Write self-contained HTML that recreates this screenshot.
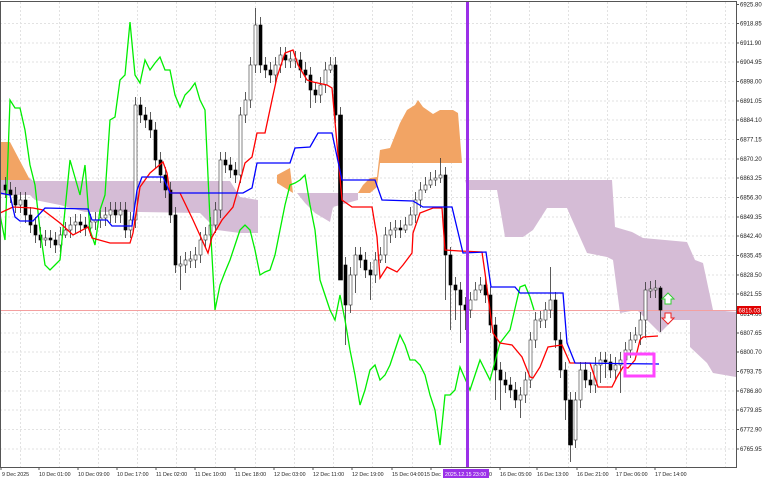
<!DOCTYPE html>
<html><head><meta charset="utf-8"><style>
body{margin:0;background:#fff;}
svg{display:block;font-family:"Liberation Sans",sans-serif;}
.g{stroke:#e2e2e2;stroke-dasharray:2 2;stroke-width:1}
.t{font-size:6px;fill:#222}
.tb{font-size:5.3px;fill:#222}
.b{fill:#000;stroke:#000;stroke-width:.6}
.w{fill:#fff;stroke:#333;stroke-width:.6}
</style></head><body>
<svg width="768" height="480" viewBox="0 0 768 480" xmlns="http://www.w3.org/2000/svg">
<rect width="768" height="480" fill="#fff"/>
<g class="g">
<path d="M0 23.5H736M0 43H736M0 62H736M0 81.5H736M0 101H736M0 120H736M0 139.5H736M0 159H736M0 178H736M0 197.5H736M0 217H736M0 236H736M0 255.5H736M0 275H736M0 294H736M0 313.5H736M0 333H736M0 352H736M0 371.5H736M0 391H736M0 410H736M0 429.5H736M0 449H736"/>
<path d="M20.5 2V467M59.5 2V467M98.5 2V467M137.5 2V467M176.5 2V467M215.5 2V467M255.5 2V467M294.5 2V467M333.5 2V467M372.5 2V467M412.5 2V467M451.5 2V467M490.5 2V467M529.5 2V467M568.5 2V467M607.5 2V467M646.5 2V467M686.5 2V467M725.5 2V467"/>
</g>
<g fill="#d5bcd6">
<polygon points="0,178 30,178 33,181 230,181 240,197 258,200 258,233 240,233 217,230 200,213 140,212 85,212 60,205 35,200 30,195 0,195"/>
<polygon points="297,193 358,193 358,200 333,207 330,222 315,213 305,203"/>
<polygon points="465,180 612,180 615,227 632,232 643,238 687,242 695,260 703,263 713,310 736,312 736,377 713,373 707,363 690,347 690,320 673,320 660,333 637,310 620,313 613,260 607,257 587,253 570,215 567,208 547,208 533,230 523,237 505,237 497,190 468,190"/>
</g>
<g fill="#f2a464">
<polygon points="0,142 10,142 30,180 0,180"/>
<polygon points="277,175 290,168 293,193 277,183"/>
<polygon points="358,193 363,185 370,178 377,177 380,150 390,148 400,123 407,110 415,105 418,100 423,107 433,114 440,110 453,110 458,113 462,163 380,163 377,187 370,193"/>
</g>
<line x1="0" y1="310.5" x2="736" y2="310.5" stroke="#f4a0a0" stroke-width="1"/>
<path stroke="#333" stroke-width="0.8" fill="none" d="M5.5 177V198M10.5 182V203M15.5 187V213M20.5 192V213M25.5 192V223M30.5 207V233M35.5 217V243M40.5 227V248M45.5 230V246M50.5 230V248M55.5 232V253M60.5 227V253M65.5 222V238M70.5 217V238M75.5 214V233M80.5 214V233M85.5 217V236M90.5 214V236M95.5 212V230M100.5 210V228M105.5 207V226M110.5 202V223M115.5 202V223M120.5 202V223M125.5 202V238M130.5 212V238M135.5 97V228M140.5 97V123M145.5 107V128M150.5 112V138M155.5 122V168M160.5 152V183M165.5 167V198M170.5 182V223M175.5 207V273M180.5 256V290M185.5 252V273M190.5 251V268M195.5 247V268M200.5 232V263M205.5 227V248M210.5 217V243M215.5 202V233M220.5 152V218M225.5 152V173M230.5 157V178M235.5 162V183M240.5 107V183M245.5 92V123M250.5 57V108M255.5 8V73M260.5 17V73M265.5 57V78M270.5 62V83M275.5 57V83M280.5 47V73M285.5 47V68M290.5 51V68M295.5 51V68M300.5 52V78M305.5 62V83M310.5 67V108M315.5 82V103M320.5 77V103M325.5 62V93M330.5 57V73M335.5 57V123M340.5 107V273M345.5 257V345M350.5 267V313M355.5 247V293M360.5 247V268M365.5 252V278M370.5 262V300M375.5 252V283M380.5 247V263M385.5 227V263M390.5 222V243M395.5 220V238M400.5 220V238M405.5 217V233M410.5 207V223M415.5 192V223M420.5 182V208M425.5 177V193M430.5 172V188M435.5 170V186M440.5 158V183M445.5 167V300M450.5 247V330M455.5 277V320M460.5 282V343M465.5 297V330M470.5 292V318M475.5 282V298M480.5 277V293M485.5 277V303M490.5 287V333M495.5 317V400M500.5 362V410M505.5 372V393M510.5 377V398M515.5 382V408M520.5 387V418M525.5 372V403M530.5 332V388M535.5 312V348M540.5 311V328M545.5 302V328M550.5 267V318M555.5 292V348M560.5 332V378M565.5 362V420M570.5 392V462M575.5 392V448M580.5 362V408M585.5 362V388M590.5 372V393M595.5 357V393M600.5 352V383M605.5 352V378M610.5 354V378M615.5 357V380M620.5 352V393M625.5 342V368M630.5 332V358M635.5 327V343M640.5 312V345M645.5 282V338M650.5 281V298M655.5 280V298M660.5 286V332"/>
<g class="b">
<rect x="4" y="185" width="3" height="5"/><rect x="9" y="190" width="3" height="5"/><rect x="14" y="195" width="3" height="10"/><rect x="24" y="200" width="3" height="15"/><rect x="29" y="215" width="3" height="10"/><rect x="34" y="225" width="3" height="10"/><rect x="39" y="235" width="3" height="5"/><rect x="49" y="238" width="3" height="2"/><rect x="54" y="240" width="3" height="5"/><rect x="79" y="222" width="3" height="3"/><rect x="84" y="225" width="3" height="3"/><rect x="114" y="210" width="3" height="5"/><rect x="124" y="210" width="3" height="20"/><rect x="139" y="105" width="3" height="10"/><rect x="144" y="115" width="3" height="5"/><rect x="149" y="120" width="3" height="10"/><rect x="154" y="130" width="3" height="30"/><rect x="159" y="160" width="3" height="15"/><rect x="164" y="175" width="3" height="15"/><rect x="169" y="190" width="3" height="25"/><rect x="174" y="215" width="3" height="50"/><rect x="224" y="160" width="3" height="5"/><rect x="229" y="165" width="3" height="5"/><rect x="234" y="170" width="3" height="5"/><rect x="259" y="25" width="3" height="40"/><rect x="264" y="65" width="3" height="5"/><rect x="269" y="70" width="3" height="5"/><rect x="284" y="55" width="3" height="5"/><rect x="299" y="60" width="3" height="10"/><rect x="304" y="70" width="3" height="5"/><rect x="309" y="75" width="3" height="15"/><rect x="314" y="90" width="3" height="5"/><rect x="334" y="65" width="3" height="50"/><rect x="338.5" y="115" width="4" height="165"/><rect x="344" y="265" width="3" height="40"/><rect x="359" y="255" width="3" height="5"/><rect x="364" y="260" width="3" height="10"/><rect x="369" y="270" width="3" height="5"/><rect x="399" y="228" width="3" height="2"/><rect x="444" y="175" width="3" height="80"/><rect x="449" y="255" width="3" height="30"/><rect x="454" y="285" width="3" height="5"/><rect x="459" y="290" width="3" height="15"/><rect x="464" y="305" width="3" height="5"/><rect x="484" y="285" width="3" height="10"/><rect x="489" y="295" width="3" height="30"/><rect x="494" y="325" width="3" height="45"/><rect x="499" y="370" width="3" height="10"/><rect x="504" y="380" width="3" height="5"/><rect x="509" y="385" width="3" height="5"/><rect x="514" y="390" width="3" height="10"/><rect x="554" y="300" width="3" height="40"/><rect x="559" y="340" width="3" height="30"/><rect x="564" y="370" width="3" height="30"/><rect x="568.5" y="400" width="4" height="45"/><rect x="584" y="370" width="3" height="10"/><rect x="589" y="380" width="3" height="5"/><rect x="604" y="360" width="3" height="2"/><rect x="609" y="362" width="3" height="8"/><rect x="659" y="288" width="3" height="22"/>
</g>
<g class="w">
<rect x="19" y="200" width="3" height="5"/><rect x="44" y="238" width="3" height="2"/><rect x="59" y="235" width="3" height="10"/><rect x="64" y="230" width="3" height="5"/><rect x="69" y="225" width="3" height="5"/><rect x="74" y="222" width="3" height="3"/><rect x="89" y="222" width="3" height="6"/><rect x="94" y="220" width="3" height="2"/><rect x="99" y="218" width="3" height="2"/><rect x="104" y="215" width="3" height="3"/><rect x="109" y="210" width="3" height="5"/><rect x="119" y="210" width="3" height="5"/><rect x="129" y="220" width="3" height="10"/><rect x="134" y="105" width="3" height="115"/><rect x="179" y="264" width="3" height="2"/><rect x="184" y="260" width="3" height="5"/><rect x="189" y="259" width="3" height="2"/><rect x="194" y="255" width="3" height="5"/><rect x="199" y="240" width="3" height="15"/><rect x="204" y="235" width="3" height="5"/><rect x="209" y="225" width="3" height="10"/><rect x="214" y="210" width="3" height="15"/><rect x="219" y="160" width="3" height="50"/><rect x="239" y="115" width="3" height="60"/><rect x="244" y="100" width="3" height="15"/><rect x="249" y="65" width="3" height="35"/><rect x="254" y="25" width="3" height="40"/><rect x="274" y="65" width="3" height="10"/><rect x="279" y="55" width="3" height="10"/><rect x="289" y="59" width="3" height="2"/><rect x="294" y="59" width="3" height="2"/><rect x="319" y="85" width="3" height="10"/><rect x="324" y="70" width="3" height="15"/><rect x="329" y="65" width="3" height="5"/><rect x="349" y="275" width="3" height="30"/><rect x="354" y="255" width="3" height="20"/><rect x="374" y="260" width="3" height="15"/><rect x="379" y="255" width="3" height="5"/><rect x="384" y="235" width="3" height="20"/><rect x="389" y="230" width="3" height="5"/><rect x="394" y="228" width="3" height="2"/><rect x="404" y="225" width="3" height="5"/><rect x="409" y="215" width="3" height="10"/><rect x="414" y="200" width="3" height="15"/><rect x="419" y="190" width="3" height="10"/><rect x="424" y="185" width="3" height="5"/><rect x="429" y="180" width="3" height="5"/><rect x="434" y="178" width="3" height="2"/><rect x="439" y="175" width="3" height="3"/><rect x="469" y="300" width="3" height="10"/><rect x="474" y="290" width="3" height="10"/><rect x="479" y="285" width="3" height="5"/><rect x="519" y="395" width="3" height="5"/><rect x="524" y="380" width="3" height="15"/><rect x="529" y="340" width="3" height="40"/><rect x="534" y="320" width="3" height="20"/><rect x="539" y="319" width="3" height="2"/><rect x="544" y="310" width="3" height="10"/><rect x="549" y="300" width="3" height="10"/><rect x="574" y="400" width="3" height="40"/><rect x="579" y="370" width="3" height="30"/><rect x="594" y="365" width="3" height="20"/><rect x="599" y="360" width="3" height="5"/><rect x="614" y="365" width="3" height="5"/><rect x="619" y="360" width="3" height="5"/><rect x="624" y="350" width="3" height="10"/><rect x="629" y="340" width="3" height="10"/><rect x="634" y="335" width="3" height="5"/><rect x="639" y="320" width="3" height="15"/><rect x="644" y="290" width="3" height="30"/><rect x="649" y="289" width="3" height="2"/><rect x="654" y="288" width="3" height="2"/>
</g>
<polyline fill="none" stroke="#00ee00" stroke-width="1.3" points="0,215 5,240 10,100 15,108 20,108 25,130 30,165 35,185 40,230 45,265 50,270 55,265 60,260 65,210 70,160 80,195 85,165 90,230 95,245 100,210 105,195 110,120 115,117 120,80 125,75 130,22 135,75 140,83 145,60 150,70 155,63 160,57 165,70 170,70 175,95 180,107 185,95 190,90 195,83 200,100 205,110 210,220 215,310 220,285 225,272 230,260 235,245 240,230 245,225 250,230 255,250 260,275 265,272 270,270 275,255 280,230 285,205 290,185 295,183 300,180 305,175 310,205 315,230 320,280 325,295 330,310 335,320 340,295 345,320 350,350 355,375 360,405 365,390 370,370 375,365 380,380 385,375 390,365 395,350 400,335 405,345 410,360 415,360 420,365 425,375 430,395 435,410 440,445 445,395 450,395 455,390 460,367 470,390 480,360 490,380 500,343 510,330 520,287 525,285 530,297 534,310"/>
<polyline fill="none" stroke="#ff0000" stroke-width="1.3" points="0,213 13,207 33,208 43,210 60,223 73,235 88,227 92,238 110,243 130,243 133,233 140,187 150,173 163,162 167,173 170,193 180,193 193,220 208,253 212,237 222,220 233,207 237,193 245,163 252,157 257,133 265,133 272,100 277,77 285,53 293,50 298,65 307,80 313,82 327,85 332,88 342,200 352,207 372,207 377,237 380,278 387,267 397,272 403,265 412,253 413,233 420,213 433,208 442,208 445,250 460,251 482,252 485,273 493,333 500,343 512,345 522,357 530,377 533,378 540,367 548,347 562,345 570,363 590,363 598,387 612,387 617,377 623,367 628,368 635,360 640,340 643,337 658,336"/>
<polyline fill="none" stroke="#0000ff" stroke-width="1.3" points="0,193 10,195 15,217 20,221 33,221 45,208 88,209 92,220 107,220 112,226 132,226 137,190 142,177 163,177 170,193 243,193 252,188 257,163 290,163 295,148 310,147 318,133 332,133 342,180 375,180 382,200 413,201 423,207 452,207 463,253 486,252 491,287 515,287 520,293 563,293 567,343 575,363 659,364"/>
<rect x="466" y="2" width="3" height="465" fill="#9b30e8"/>
<rect x="625" y="354" width="29" height="22" fill="none" stroke="#ff44ff" stroke-width="3"/>
<path d="M665 304V299H662L668 293L674 299H671V304Z" fill="#fff" stroke="#33cc33" stroke-width="1"/>
<path d="M665 313V318H662L668 324L674 318H671V313Z" fill="#fff" stroke="#ee2222" stroke-width="1"/>
<rect x="0.5" y="1.5" width="736" height="466" fill="none" stroke="#555" stroke-width="1"/>
<g stroke="#555"><path d="M736 4.5h3M736 23.5h3M736 43h3M736 62h3M736 81.5h3M736 101h3M736 120h3M736 139.5h3M736 159h3M736 178h3M736 197.5h3M736 217h3M736 236h3M736 255.5h3M736 275h3M736 294h3M736 333h3M736 352h3M736 371.5h3M736 391h3M736 410h3M736 429.5h3M736 449h3"/></g>
<g class="t">
<text x="740" y="6.5">6925.80</text><text x="740" y="25.5">6918.85</text><text x="740" y="45">6911.90</text><text x="740" y="64">6904.95</text><text x="740" y="83.5">6898.00</text><text x="740" y="103">6891.05</text><text x="740" y="122">6884.10</text><text x="740" y="141.5">6877.15</text><text x="740" y="161">6870.20</text><text x="740" y="180">6863.25</text><text x="740" y="199.5">6856.30</text><text x="740" y="219">6849.35</text><text x="740" y="238">6842.40</text><text x="740" y="257.5">6835.45</text><text x="740" y="277">6828.50</text><text x="740" y="296">6821.55</text><text x="740" y="316">6814.60</text><text x="740" y="335">6807.65</text><text x="740" y="354">6800.70</text><text x="740" y="373.5">6793.75</text><text x="740" y="393">6786.80</text><text x="740" y="412">6779.85</text><text x="740" y="431.5">6772.90</text><text x="740" y="451">6765.95</text>
</g>
<rect x="737" y="306" width="24" height="8" fill="#e00000"/>
<text x="738.5" y="312.5" font-size="6" fill="#fff">6815.03</text>
<g stroke="#555"><path d="M1 467v3M39 467v3M78 467v3M117 467v3M156 467v3M195 467v3M235 467v3M274 467v3M313 467v3M352 467v3M392 467v3M431 467v3M500 467v3M537 467v3M577 467v3M616 467v3M655 467v3"/></g>
<g class="tb">
<text x="2" y="476">9 Dec 2025</text><text x="39" y="476">10 Dec 01:00</text><text x="78" y="476">10 Dec 09:00</text><text x="117" y="476">10 Dec 17:00</text><text x="156" y="476">11 Dec 02:00</text><text x="195" y="476">11 Dec 10:00</text><text x="235" y="476">11 Dec 18:00</text><text x="274" y="476">12 Dec 03:00</text><text x="313" y="476">12 Dec 11:00</text><text x="352" y="476">12 Dec 19:00</text><text x="392" y="476">15 Dec 04:00</text><text x="424" y="476">15 Dec</text><text x="489" y="476">0</text><text x="500" y="476">16 Dec 05:00</text><text x="537" y="476">16 Dec 13:00</text><text x="577" y="476">16 Dec 21:00</text><text x="616" y="476">17 Dec 06:00</text><text x="655" y="476">17 Dec 14:00</text>
</g>
<rect x="443" y="469" width="46" height="9" fill="#9b30e8"/>
<text x="445" y="476" font-size="5.3" fill="#fff">2025.12.15 23:00</text>
</svg>
</body></html>
